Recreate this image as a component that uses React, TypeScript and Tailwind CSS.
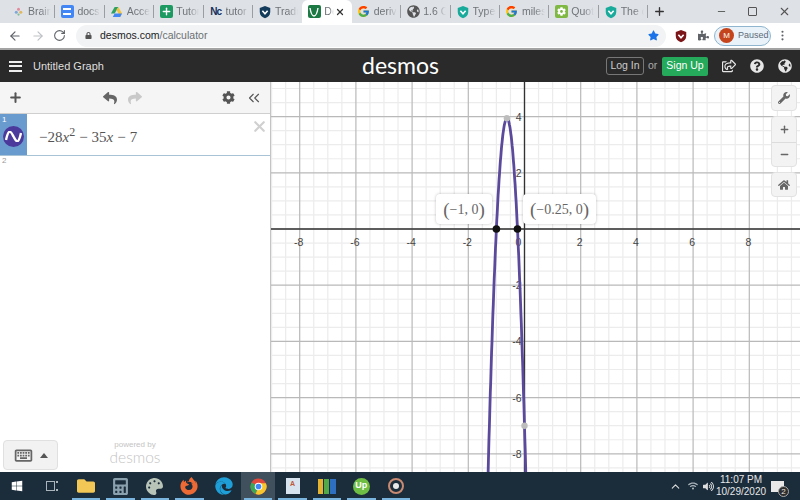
import { ArrowLeft, ArrowRight, ChevronUp, Minus, Plus, RotateCw, X, MoreVertical, ChevronsLeft } from 'lucide-react';
import {
  FaCog, FaFirefoxBrowser, FaGlobeAmericas, FaHome, FaLock, FaPuzzlePiece, FaQuestionCircle, FaRegShareSquare,
  FaReply, FaShare, FaStar, FaWindows, FaWrench, FaEdge, FaPalette, FaCalculator, FaFolder, FaWifi, FaVolumeUp,
} from 'react-icons/fa';
import { FcGoogle } from 'react-icons/fc';
import { MdOutlineKeyboard } from 'react-icons/md';
import type { ReactNode } from 'react';

const UNIT = 28.1;
const OX = 253.5;
const OY = 147;

const sx = (x: number) => OX + x * UNIT;
const sy = (y: number) => OY - y * UNIT;

const curve = Array.from({ length: 121 }, (_, i) => {
  const x = -1.32 + (i / 120) * 1.39;
  return `${sx(x).toFixed(1)},${sy(-28 * x * x - 35 * x - 7).toFixed(1)}`;
}).join(' ');

const range = (from: number, to: number, step: number) => {
  const out: number[] = [];
  for (let v = from; v <= to; v += step) out.push(v);
  return out;
};

function Square({ className, children }: { className: string; children?: ReactNode }) {
  return <div className={`w-[13px] h-[13px] rounded-[2px] flex items-center justify-center shrink-0 ${className}`}>{children}</div>;
}

const Shield = ({ color }: { color: string }) => (
  <svg width="14" height="14" viewBox="0 0 16 16" className="shrink-0">
    <path d="M8 1l6 2.500v4.500c0 3.500-2.500 6-6 7-3.500-1-6-3.500-6-7V3.500z" fill={color} />
    <path d="M5 6.500l3 3.500 3-3.500" stroke="#fff" strokeWidth="1.800" fill="none" />
  </svg>
);

const tabs: { title: string; icon: ReactNode }[] = [
  { title: 'Brainl', icon: <svg width="9" height="9" viewBox="0 0 12 12"><circle cx="6" cy="3" r="2" fill="#e58a9c" /><circle cx="3" cy="7" r="2" fill="#7fa8d8" /><circle cx="9" cy="7" r="2" fill="#e0b860" /><circle cx="6" cy="10" r="1.500" fill="#7fc09a" /></svg> },
  { title: 'docs.g', icon: <Square className="bg-[#4285f4]"><div className="w-[8px] h-[7px] border-y-2 border-white" /></Square> },
  { title: 'Acces', icon: <svg width="13" height="12" viewBox="0 0 14 13"><path d="M5 1h4L5 8H1z" fill="#2da160" /><path d="M9 1l4 7-2 4-4-8z" fill="#f5c33b" /><path d="M3 12l2-4h8l-2 4z" fill="#4285f4" /></svg> },
  { title: 'Tutor', icon: <Square className="bg-[#1d9a61]"><Plus size={11} strokeWidth={3} color="#fff" /></Square> },
  { title: 'tutor', icon: <span className="text-[10px] font-bold text-[#14305c] leading-none tracking-[-1px]">Nc</span> },
  { title: 'Tradu', icon: <Shield color="#123a5a" /> },
  { title: 'De', icon: <Square className="bg-[#1d7a45]"><svg width="10" height="10" viewBox="0 0 10 10"><path d="M1 1c1 6 2 8 4 8s3-2 4-8" stroke="#fff" strokeWidth="1.400" fill="none" /></svg></Square> },
  { title: 'deriva', icon: <FcGoogle size={13} /> },
  { title: '1.6 Cc', icon: <FaGlobeAmericas size={13} color="#555" /> },
  { title: 'Types', icon: <Shield color="#18ab9b" /> },
  { title: 'miles', icon: <FcGoogle size={13} /> },
  { title: 'Quoti', icon: <Square className="bg-[#7fb843]"><FaCog size={9} color="#fff" /></Square> },
  { title: 'The q', icon: <Shield color="#18ab9b" /> },
];

const dock: { key: string; icon: ReactNode; active?: boolean; line?: boolean }[] = [
  { key: 'explorer', line: true, icon: <FaFolder size={18} color="#f3c755" /> },
  { key: 'calc', line: true, icon: <FaCalculator size={17} color="#8aa0ad" /> },
  { key: 'paint', line: true, icon: <FaPalette size={17} color="#b9c4b8" /> },
  { key: 'firefox', line: true, icon: <FaFirefoxBrowser size={18} color="#ee6a34" /> },
  { key: 'edge', icon: <FaEdge size={18} color="#1f9fd8" /> },
  {
    key: 'chrome',
    active: true,
    line: true,
    icon: (
      <svg width="17" height="17" viewBox="0 0 18 18">
        <circle cx="9" cy="9" r="8.500" fill="#e2493b" />
        <path d="M9 9L1.600 4.800A8.500 8.500 0 0 0 6 17z" fill="#3aa757" />
        <path d="M9 9l-3 8A8.500 8.500 0 0 0 16.800 5.500H9z" fill="#f7c52d" />
        <circle cx="9" cy="9" r="4" fill="#fff" />
        <circle cx="9" cy="9" r="3" fill="#4285f4" />
      </svg>
    ),
  },
  { key: 'notes', line: true, icon: <div className="w-[14px] h-[16px] bg-[#d7e4ef] text-[7px] text-[#c0563a] font-bold text-center leading-[12px]">A</div> },
  { key: 'books', line: true, icon: <div className="flex h-[15px] gap-px"><div className="w-[5px] bg-[#e4b32f]" /><div className="w-[5px] bg-[#53a848]" /><div className="w-[6px] bg-[#2e6fc2]" /></div> },
  { key: 'upwork', line: true, icon: <div className="w-[17px] h-[17px] rounded-full bg-[#6fbe44] text-white text-[9px] font-bold flex items-center justify-center">Up</div> },
  { key: 'disc', line: true, icon: <div className="w-[16px] h-[16px] rounded-full border-2 border-[#c98a72] flex items-center justify-center"><div className="w-[6px] h-[6px] rounded-full bg-[#e8e8e8]" /></div> },
];

function TabStrip() {
  return (
    <div className="h-[23px] bg-[#dee1e6] flex items-center pl-[6px] text-[#6f7479]">
      {tabs.map((tab, i) => {
        const active = i === 6;
        const noLine = active || i === 5;
        return (
          <div
            key={tab.title}
            className={`h-[23px] w-[49.4px] pl-[5px] flex items-center gap-[3px] shrink-0 ${active ? 'bg-white rounded-t-[6px]' : ''}`}
          >
            <div className="w-[14px] flex items-center justify-center shrink-0">{tab.icon}</div>
            <span className={`text-[10.500px] whitespace-nowrap [mask-image:linear-gradient(to_right,black_55%,transparent)] ${active ? 'w-[10px]' : 'w-[23px]'}`}>{tab.title}</span>
            {active && <X size={10} strokeWidth={3} color="#333" className="shrink-0 -ml-[2px]" />}
            {!noLine && <div className="h-[13px] w-px bg-[#9a9da2] ml-auto shrink-0" />}
          </div>
        );
      })}
      <Plus size={13} strokeWidth={2.500} color="#333" className="ml-[5px]" />
      <div className="flex-1" />
      <Minus size={11} color="#555" className="mr-[21px]" />
      <div className="w-[9px] h-[9px] border border-[#555] rounded-[1px] mr-[21px]" />
      <X size={13} color="#555" className="mr-[9px]" />
    </div>
  );
}

function AddressBar() {
  return (
    <div className="h-[27px] bg-white border-b-2 border-[#a3a3a3] flex items-center pl-[8px] text-[#5f6368] shrink-0">
      <ArrowLeft size={14} />
      <ArrowRight size={14} color="#bdc1c6" className="ml-[9px]" />
      <RotateCw size={13} className="ml-[8px]" />
      <div className="ml-[10px] w-[590px] h-[22px] rounded-full bg-[#f1f3f4] flex items-center pl-[9px] pr-[7px]">
        <FaLock size={7} color="#555" />
        <span className="ml-[8px] text-[10.500px] text-[#202124]">desmos.com<span className="text-[#6b6f73]">/calculator</span></span>
        <div className="flex-1" />
        <FaStar size={11} color="#1a73e8" />
      </div>
      <div className="ml-[8px]"><Shield color="#7c1518" /></div>
      <FaPuzzlePiece size={11} color="#5f6368" className="ml-[10px]" />
      <div className="ml-[5px] h-[20px] w-[57px] rounded-full border border-[#8fb5cf] bg-[#e9f2f8] flex items-center pl-[4px] gap-[4px]">
        <div className="w-[15px] h-[15px] rounded-full bg-[#c5441c] text-white text-[8px] flex items-center justify-center shrink-0">M</div>
        <span className="text-[9px] text-[#5c6b78]">Paused</span>
      </div>
      <MoreVertical size={13} className="ml-[5px]" />
    </div>
  );
}

function DesmosHeader() {
  return (
    <div className="h-[32px] bg-[#2a2a2a] flex items-center relative text-white shrink-0">
      <div className="ml-[9px] w-[13px] h-[11px] border-y-2 border-[#eee] relative">
        <div className="absolute left-0 right-0 top-[2.500px] h-[2px] bg-[#eee]" />
      </div>
      <span className="ml-[11px] text-[11px] text-[#dfdfdf]">Untitled Graph</span>
      <span className="absolute left-[362px] top-[-3px] text-[23px] font-['Lato'] leading-[36px]">desmos</span>
      <div className="flex-1" />
      <div className="w-[38px] h-[18px] border border-[#777] rounded-[3px] text-[10.500px] text-[#ccc] flex items-center justify-center">Log In</div>
      <span className="ml-[4px] w-[9px] text-[10.500px] text-[#aaa]">or</span>
      <div className="ml-[5px] w-[46px] h-[19px] bg-[#25a95a] rounded-[2px] text-[10.500px] flex items-center justify-center">Sign Up</div>
      <FaRegShareSquare size={14} color="#e6e6e6" className="ml-[14px]" />
      <FaQuestionCircle size={14} color="#e6e6e6" className="ml-[14px]" />
      <FaGlobeAmericas size={14} color="#e6e6e6" className="ml-[14px] mr-[8px]" />
    </div>
  );
}

function ExpressionPanel() {
  return (
    <div className="w-[271px] shrink-0 bg-white border-r border-[#c4c4c4] flex flex-col relative z-10">
      <div className="h-[32px] bg-[#f5f5f5] border-b border-[#cfcfcf] flex items-center text-[#555] shrink-0">
        <Plus size={15} strokeWidth={3.200} className="ml-[8px]" />
        <FaReply size={14} className="ml-[80px]" color="#666" />
        <FaShare size={14} className="ml-[11px]" color="#c9c9c9" />
        <div className="flex-1" />
        <FaCog size={13} color="#555" />
        <ChevronsLeft size={18} strokeWidth={1.500} className="ml-[10px] mr-[7px]" />
      </div>
      <div className="h-[42px] flex border-b border-[#a9c3d6] relative shrink-0">
        <div className="w-[27px] bg-[#6a9bcf] relative flex items-center justify-center shrink-0">
          <span className="absolute left-[2px] top-[1px] text-[8px] leading-[10px] text-white">1</span>
          <div className="w-[21px] h-[21px] mt-[3px] rounded-full bg-[#4b3a9c] flex items-center justify-center">
            <svg width="17" height="11" viewBox="0 0 17 11"><path d="M1 9C4 -4 6 1 8.500 5.500S13 15 16 2" stroke="#fff" strokeWidth="2.400" fill="none" /></svg>
          </div>
        </div>
        <div className="pl-[12px] pt-[13px] text-[15px] leading-[20px] text-[#555] font-['Liberation_Serif',serif] whitespace-nowrap">
          −28<i>x</i><sup className="text-[12px] top-[-6px] relative align-baseline">2</sup><span className="ml-[4px]">−</span><span className="ml-[4px]">35</span><i>x</i><span className="ml-[4px]">−</span><span className="ml-[4px]">7</span>
        </div>
        <X size={17} strokeWidth={3} color="#d0d0d0" className="absolute right-[2px] top-[4px]" />
      </div>
      <div className="flex-1 relative">
        <div className="w-[27px] pl-[2px] text-[8px] leading-[10px] text-[#999]">2</div>
        <div className="absolute left-[3px] bottom-[2px] w-[55px] h-[30px] rounded-[4px] bg-[#f2f2f2] border border-[#e0e0e0] flex items-center justify-center gap-[6px] text-[#666]">
          <MdOutlineKeyboard size={21} />
          <svg width="8" height="5" viewBox="0 0 8 5"><path d="M0 5l4-5 4 5z" fill="#555" /></svg>
        </div>
        <div className="absolute left-[105px] bottom-[7px] w-[60px] text-center text-[#c4c4c4]">
          <div className="text-[8px] leading-[8px]">powered by</div>
          <div className="text-[15.500px] font-['Lato'] font-light leading-[16px]">desmos</div>
        </div>
      </div>
    </div>
  );
}

function Coord({ className, value }: { className: string; value: string }) {
  return (
    <div className={`absolute top-[112px] h-[30px] rounded-[4px] bg-white shadow-[0_0_3px_rgba(0,0,0,0.25)] flex items-center justify-center text-[14px] text-[#666] font-['Liberation_Serif',serif] ${className}`}>
      <span className="text-[19px] leading-none font-light">(</span>
      <span>{value}</span>
      <span className="text-[19px] leading-none font-light">)</span>
    </div>
  );
}

function Graph() {
  const minorX = range(-20, 20, 1).map((n) => n * 0.5).filter((x) => Number.isInteger(x / 2) === false);
  const minorY = range(-18, 20, 1).map((n) => n * 0.5).filter((y) => Number.isInteger(y / 2) === false);
  const majorX = range(-8, 8, 2);
  const majorY = range(-8, 4, 2);

  return (
    <div className="flex-1 relative overflow-hidden bg-white">
      <svg width="529" height="390" className="absolute left-0 top-0 font-['Liberation_Sans',sans-serif]">
        {minorX.map((x) => <line key={`mx${x}`} x1={sx(x)} x2={sx(x)} y1="0" y2="390" stroke="#ececec" strokeWidth="1.200" />)}
        {minorY.map((y) => <line key={`my${y}`} y1={sy(y)} y2={sy(y)} x1="0" x2="529" stroke="#ececec" strokeWidth="1.200" />)}
        {majorX.map((x) => <line key={`Mx${x}`} x1={sx(x)} x2={sx(x)} y1="0" y2="390" stroke="#b9b9b9" strokeWidth="1.200" />)}
        {majorY.map((y) => <line key={`My${y}`} y1={sy(y)} y2={sy(y)} x1="0" x2="529" stroke="#b9b9b9" strokeWidth="1.200" />)}
        <line x1={OX} x2={OX} y1="0" y2="390" stroke="#333" strokeWidth="1.300" />
        <line y1={OY} y2={OY} x1="0" x2="529" stroke="#333" strokeWidth="1.300" />
        {majorX.filter((x) => x !== 0).map((x) => (
          <text key={`tx${x}`} x={sx(x) - 1} y={OY + 17} fontSize="10.500" fill="#444" textAnchor="middle">{x < 0 ? `-${-x}` : x}</text>
        ))}
        <text x={OX - 6} y={OY + 17} fontSize="10.500" fill="#444" textAnchor="middle">0</text>
        {majorY.filter((y) => y !== 0).map((y) => (
          <text key={`ty${y}`} x={OX - 3} y={sy(y) + 4} fontSize="10.500" fill="#444" textAnchor="end">{y < 0 ? `-${-y}` : y}</text>
        ))}
        <polyline points={curve} fill="none" stroke="#5b4a9c" strokeWidth="2.800" />
        <circle cx={sx(-0.625)} cy={sy(3.94)} r="3.200" fill="#bdbdbd" />
        <circle cx={sx(0)} cy={sy(-7)} r="3.200" fill="#bdbdbd" />
        <circle cx={sx(-1)} cy={OY} r="3.800" fill="#111" />
        <circle cx={sx(-0.25)} cy={OY} r="3.800" fill="#111" />
      </svg>

      <Coord className="left-[165px] w-[56px]" value="−1, 0" />
      <Coord className="left-[252px] w-[73px]" value="−0.25, 0" />

      <div className="absolute right-[3px] top-[3px] flex flex-col gap-[5px] text-[#666]">
        <div className="w-[26px] h-[26px] bg-[#f3f3f3] border border-[#e2e2e2] rounded-[4px] flex items-center justify-center"><FaWrench size={12} /></div>
        <div className="w-[26px] h-[51px] bg-[#f3f3f3] border border-[#e2e2e2] rounded-[4px] flex flex-col">
          <div className="h-[26px] flex items-center justify-center border-b border-[#dcdcdc]"><Plus size={11} strokeWidth={3} /></div>
          <div className="flex-1 flex items-center justify-center"><Minus size={11} strokeWidth={3} /></div>
        </div>
        <div className="w-[26px] h-[25px] bg-[#f3f3f3] border border-[#e2e2e2] rounded-[4px] flex items-center justify-center"><FaHome size={12} /></div>
      </div>
    </div>
  );
}

function Taskbar() {
  return (
    <div className="h-[28px] bg-[#1b2c3b] flex items-stretch shrink-0 text-[#e8e8e8] relative z-20">
      <div className="w-[34px] flex items-center justify-center"><FaWindows size={12} color="#fff" /></div>
      <div className="w-[35px] flex items-center justify-center gap-[1px]">
        <div className="w-[9px] h-[10px] border-y border-x border-[#aab4bb]" />
        <div className="w-[2px] h-[10px] border-y-2 border-[#aab4bb]" />
      </div>
      {dock.map((item) => (
        <div key={item.key} className={`w-[34.400px] flex items-center justify-center relative ${item.active ? 'bg-[#40505d]' : ''}`}>
          {item.icon}
          {item.line && <div className="absolute bottom-0 left-[3px] right-[3px] h-[2px] bg-[#7ab5e0]" />}
        </div>
      ))}
      <div className="flex-1" />
      <div className="flex items-center gap-[5.500px] text-[#ddd]">
        <ChevronUp size={13} />
        <FaWifi size={10} color="#aab4bb" />
        <FaVolumeUp size={11} color="#ddd" />
      </div>
      <div className="w-[54px] text-center text-[10px] leading-[12px] pt-[2px] whitespace-nowrap">
        <div>11:07 PM</div>
        <div>10/29/2020</div>
      </div>
      <div className="ml-[3px] mr-[16px] relative flex items-center">
        <div className="w-[13px] h-[11px] bg-[#e8e8e8]" />
        <div className="absolute left-[7px] top-[14px] w-[11px] h-[11px] rounded-full bg-[#2d2d2d] border border-[#aaa] text-[8px] leading-[9px] text-center">2</div>
      </div>
    </div>
  );
}

export default function App() {
  return (
    <div className="w-[800px] h-[500px] overflow-hidden flex flex-col font-['Liberation_Sans',sans-serif]">
      <TabStrip />
      <AddressBar />
      <DesmosHeader />
      <div className="flex-1 flex min-h-0">
        <ExpressionPanel />
        <Graph />
      </div>
      <Taskbar />
    </div>
  );
}
